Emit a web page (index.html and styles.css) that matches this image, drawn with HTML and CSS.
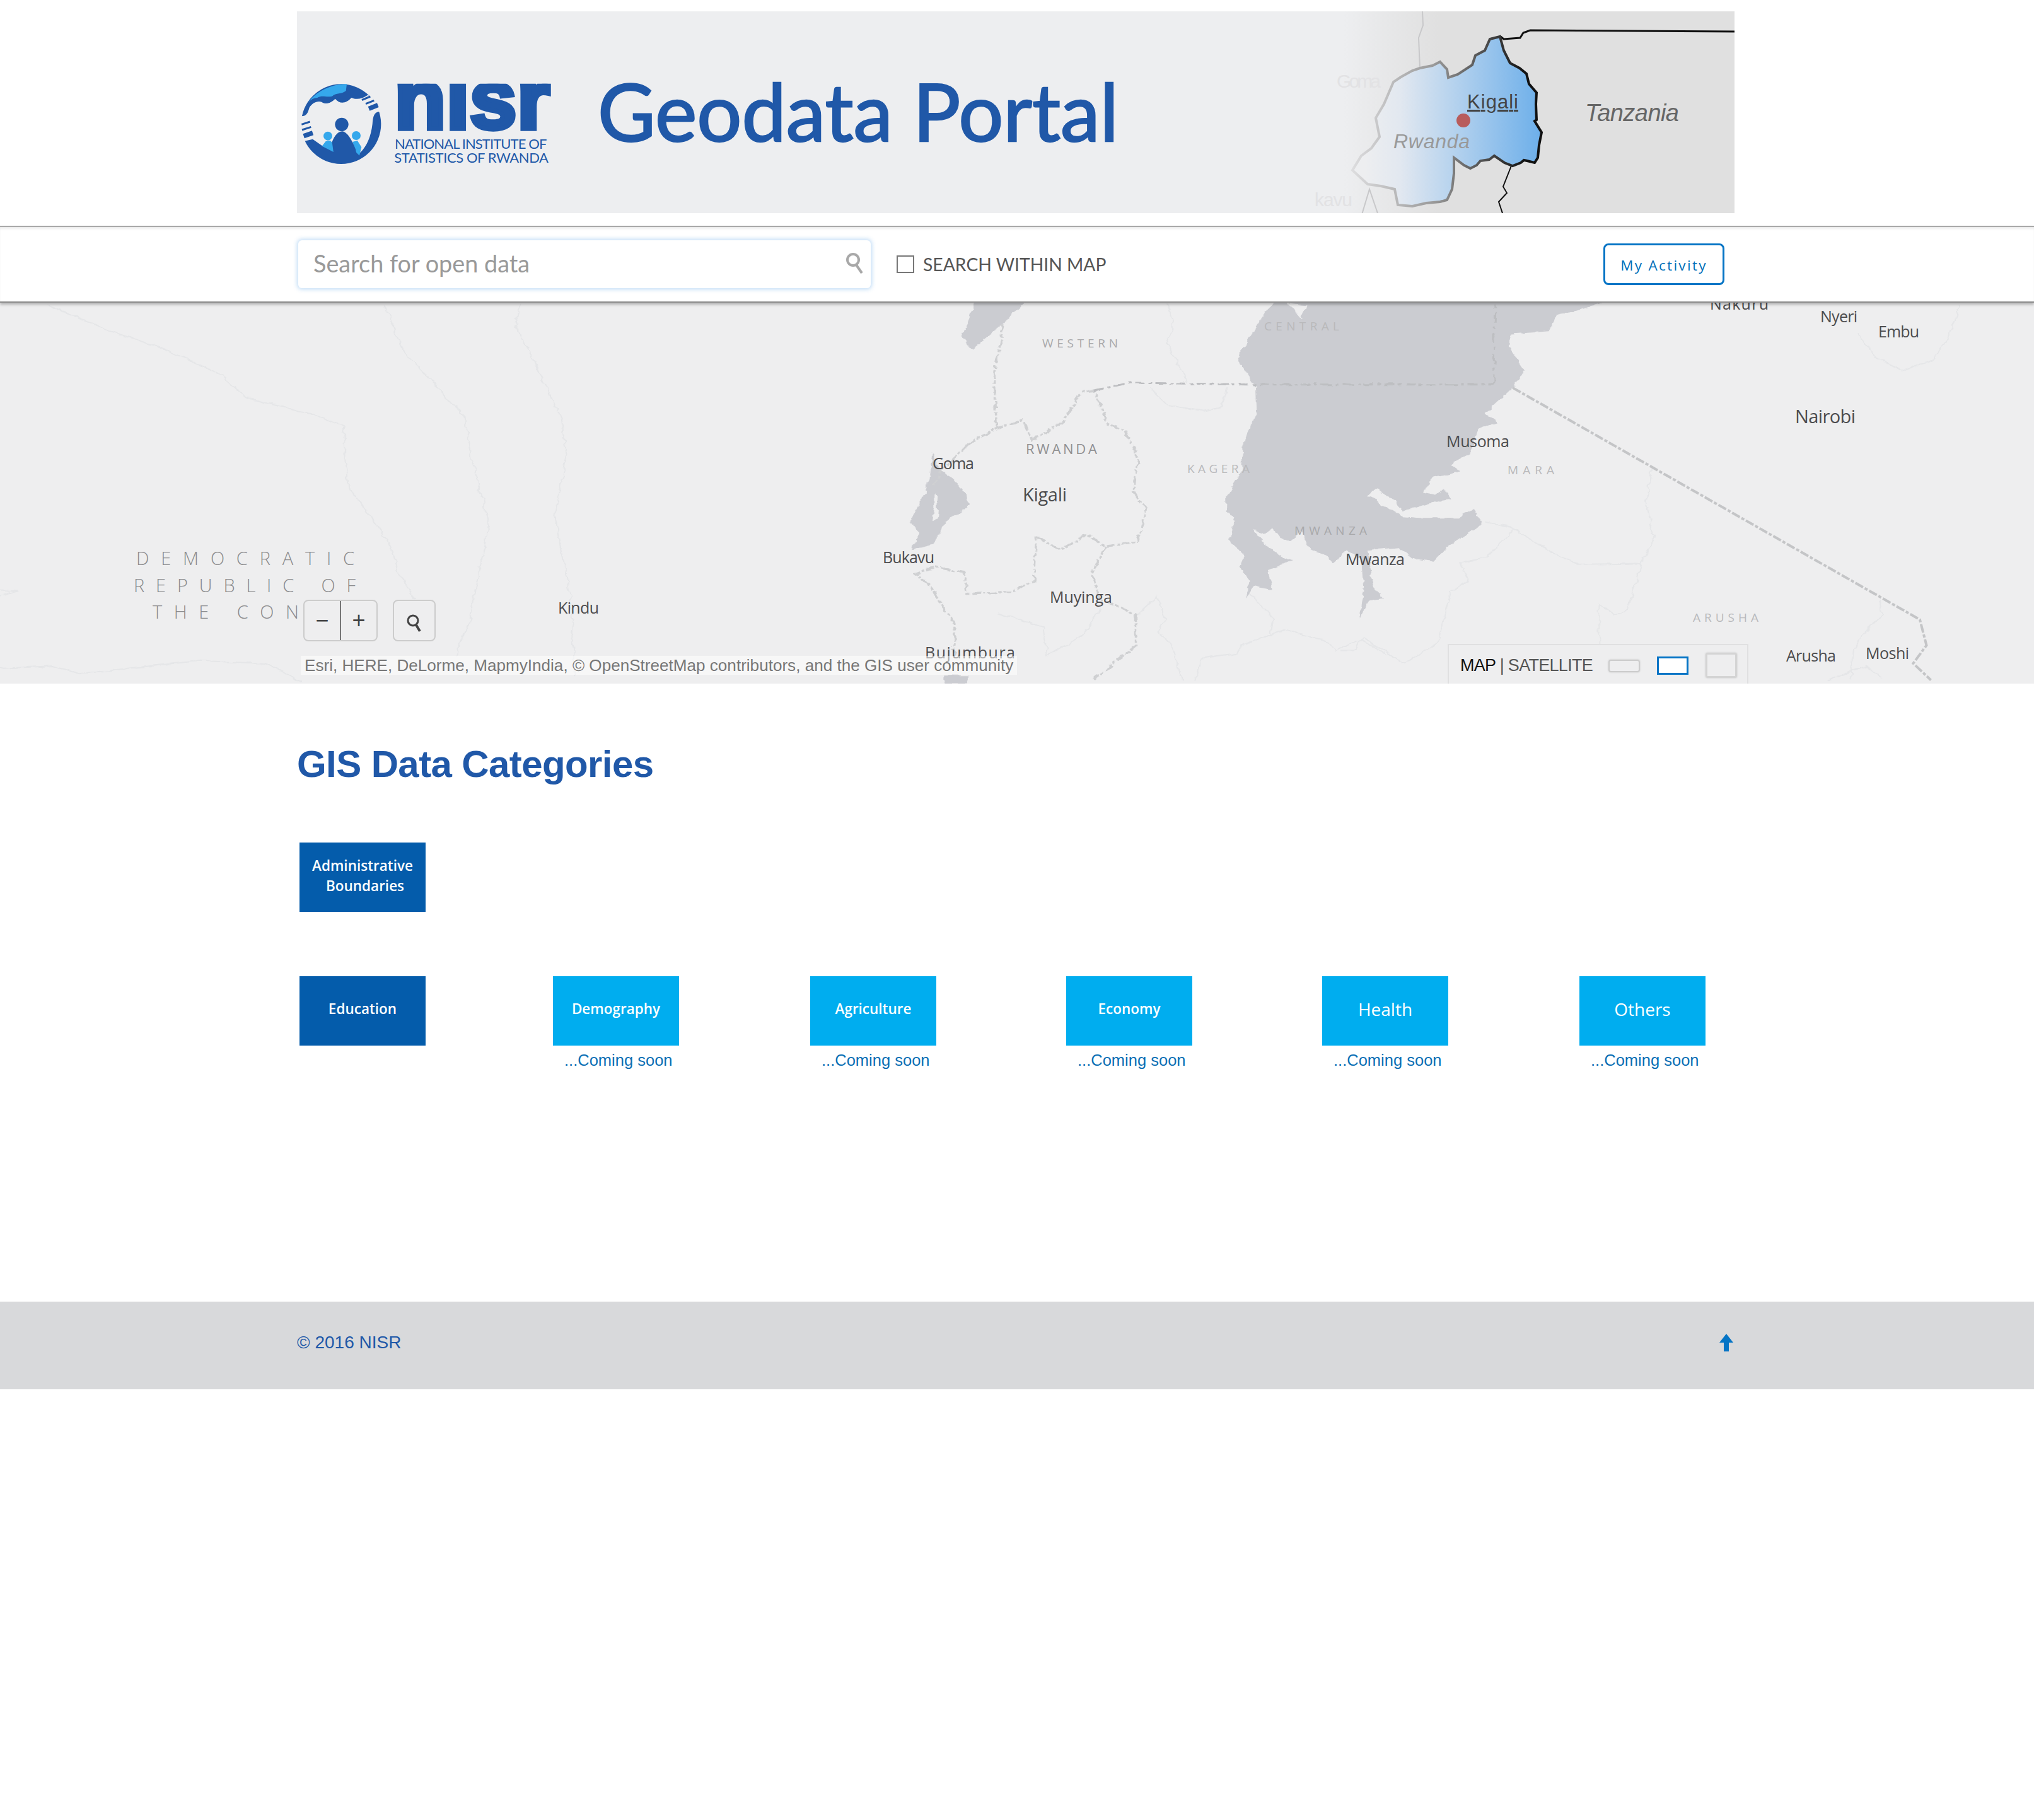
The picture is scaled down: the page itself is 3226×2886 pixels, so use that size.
FILE: index.html
```html
<!DOCTYPE html>
<html lang="en">

<head>
    <meta charset="UTF-8">
    <meta name="viewport" content="width=device-width, initial-scale=1.0">
    <link rel="stylesheet" href="styles.css">
    <title>Geodata Portal</title>
</head>

<body>
    <header class="wrap banner">
        <svg class="logo" viewBox="3 0 1257 540" role="img" aria-label="NISR logo">
            <defs>
                <clipPath id="noDot"><rect x="460" y="98" width="760" height="230"></rect></clipPath>
            </defs>
            <circle class="logo-dark" cx="213" cy="290" r="190"></circle>
            <path class="logo-light" d="M58,186 C90,140 160,100 240,100 L236,132 C215,150 190,140 170,158 C140,165 125,150 100,165 C85,165 70,172 58,186Z"></path>
            <path class="logo-hole" d="M0,258 L30,252 C50,250 55,235 62,212 C75,190 100,178 120,185 C140,200 165,190 185,170 C205,195 235,195 262,165 C285,175 310,172 340,152 L420,190 L420,240 L392,232 C372,235 365,250 362,290 C355,350 335,395 305,425 L125,395 L78,362 L0,380Z"></path>
            <path class="logo-bar" d="M25,292 L65,279 M27,318 L70,304"></path>
            <path class="logo-bar thick" d="M35,347 L78,332 M345,217 L388,200"></path>
            <path class="logo-bar" d="M312,176 L352,159 M330,194 L370,178"></path>
            <path class="logo-light" d="M122,395 L140,372 L160,368 L178,385 L190,430Z M268,375 L290,368 L310,400 L300,440 L280,420Z"></path>
            <circle class="logo-light" cx="150" cy="347" r="21"></circle>
            <circle class="logo-light" cx="285" cy="345" r="21"></circle>
            <circle class="logo-dark" cx="216" cy="292" r="32"></circle>
            <path class="logo-dark" d="M170,375 Q190,325 220,325 Q250,330 282,410 L290,450 L180,450Z"></path>
            <g clip-path="url(#noDot)">
                <text class="logo-mark" x="466" y="311" textLength="740" lengthAdjust="spacingAndGlyphs">nisr</text>
            </g>
            <text class="logo-name" x="468" y="407" textLength="724">NATIONAL INSTITUTE OF</text>
            <text class="logo-name" x="466" y="475" textLength="734">STATISTICS OF RWANDA</text>
        </svg>
        <h1 class="title">Geodata Portal</h1>
        <svg class="locator" viewBox="2000 18 751 320">
            <defs>
                <linearGradient id="rwFill" gradientUnits="userSpaceOnUse" x1="2165" y1="0" x2="2440" y2="0">
                    <stop offset="0" stop-color="#edeef0"></stop>
                    <stop offset="0.2" stop-color="#e2e8f0"></stop>
                    <stop offset="1" stop-color="#6fb0ea"></stop>
                </linearGradient>
                <linearGradient id="rwLine" gradientUnits="userSpaceOnUse" x1="2130" y1="0" x2="2420" y2="0">
                    <stop offset="0" stop-color="#e4e4e6"></stop>
                    <stop offset="0.5" stop-color="#999"></stop>
                    <stop offset="1" stop-color="#111"></stop>
                </linearGradient>
            </defs>
            <path class="loc-ghost" d="M2256,18 L2257,40 L2250,60 L2252,108"></path>
            <path class="loc-ghost" d="M2185,338 L2172,300 L2160,340"></path>
            <path class="loc-border" d="M2363,62 L2380,58 L2385,62 L2411,60 L2416,52 L2427,48 L2751,50"></path>
            <path class="loc-border thin" d="M2397,263 L2384,296 L2390,306 L2377,320 L2383,338"></path>
            <path class="loc-rw" d="M2379,58 L2385,80 L2395,100 L2410,108 L2421,117 L2425,133 L2437,147 L2436,165 L2437,190 L2434,192 L2445,210 L2441,230 L2439,250 L2434,258 L2422,255 L2417,254 L2412,258 L2399,263 L2386,258 L2370,247 L2362,253 L2348,255 L2342,262 L2332,267 L2322,262 L2306,250 L2306,275 L2303,300 L2295,317 L2284,320 L2262,322 L2240,327 L2217,325 L2212,300 L2190,295 L2169,292 L2145,270 L2159,247 L2175,235 L2188,217 L2182,187 L2195,165 L2210,130 L2222,122 L2240,112 L2252,108 L2272,104 L2284,98 L2295,110 L2297,123 L2312,118 L2335,103 L2340,88 L2355,80 L2363,62Z"></path>
            <circle class="loc-dot" cx="2321" cy="191" r="11"></circle>
            <text class="loc-ghost-text" x="2120" y="139" textLength="70">Goma</text>
            <text class="loc-ghost-text" x="2085" y="327" textLength="60">kavu</text>
            <text class="loc-kigali" x="2327" y="172" textLength="81">Kigali</text>
            <text class="loc-rwanda" x="2210" y="235" textLength="121">Rwanda</text>
            <text class="loc-tanzania" x="2514" y="192" textLength="149">Tanzania</text>
        </svg>
    </header>

    <div class="toolbar">
        <div class="wrap toolbar-inner">
            <div class="search">
                <span class="placeholder">Search for open data</span>
                <svg class="search-icon" viewBox="0 0 30 36">
                    <circle cx="12" cy="12" r="9"></circle>
                    <path d="M17,20 L26,33"></path>
                </svg>
            </div>
            <span class="checkbox"></span>
            <span class="check-label">SEARCH WITHIN MAP</span>
            <a class="activity" href="#">My Activity</a>
        </div>
    </div>

    <section class="map">
        <svg class="basemap" viewBox="0 480 3226 604">
            <defs>
                <filter id="rough" x="-5%" y="-5%" width="110%" height="110%">
                    <feTurbulence type="fractalNoise" baseFrequency="0.035" numOctaves="3" seed="4"></feTurbulence>
                    <feDisplacementMap in="SourceGraphic" scale="16" xChannelSelector="R" yChannelSelector="G"></feDisplacementMap>
                    <feGaussianBlur stdDeviation="0.7"></feGaussianBlur>
                </filter>
            </defs>
            <g class="rough" transform="translate(0 460) scale(.7015 .4082)">
                <path class="river" d="M110,60 L250,160 L360,220 L500,330 L560,420 L720,490 L775,530 L790,770 L880,980 L900,1100 L940,1200"></path>
                <path class="river" d="M870,60 L910,230 L1050,490 L1070,680 L1105,910 L1060,1300 L1030,1420"></path>
                <path class="river" d="M1180,50 L1165,130 L1270,500 L1280,650 L1255,880 L1290,1190 L1300,1500"></path>
                <path class="river" d="M0,1470 L120,1460 L180,1490 L450,1440 L600,1450 L680,1520"></path>
                <path class="river" d="M0,1165 L40,1170 L0,1185"></path>
            </g>
            <g class="rough" transform="translate(1100 460) scale(.7015 .4082)">
                <path class="lake" d="M1310,45 L1250,200 L1228,270 L1270,370 L1272,480 L1245,580 L1240,700 L1205,800 L1205,850 L1225,900 L1210,970 L1245,1030 L1235,1070 L1255,1130 L1250,1195 L1270,1150 L1310,1165 L1300,1090 L1350,1050 L1300,1000 L1262,925 L1290,950 L1310,925 L1325,960 L1345,975 L1375,935 L1395,1010 L1430,1030 L1445,1060 L1480,1010 L1510,1050 L1515,1180 L1505,1275 L1530,1205 L1563,1200 L1533,1150 L1530,1070 L1523,1010 L1593,1000 L1623,1040 L1673,1055 L1703,1000 L1783,910 L1763,845 L1728,885 L1643,885 L1603,880 L1525,800 L1545,770 L1583,820 L1603,860 L1623,850 L1678,820 L1713,810 L1698,770 L1678,795 L1648,785 L1673,730 L1733,705 L1713,680 L1753,640 L1775,540 L1818,515 L1790,480 L1853,380 L1878,310 L1843,220 L1850,170 L1935,160 L1953,100 L2053,50 L2053,30 L1310,30Z"></path>
                <path class="islet" d="M1340,50 L1385,60 L1375,110 L1355,70Z"></path>
                <path class="lake" d="M540,630 L555,690 L600,760 L625,830 L570,900 L540,990 L490,1010 L510,950 L490,900 L530,760Z"></path>
                <path class="islet" d="M545,790 L555,800 L552,880 L540,900 L545,840Z"></path>
                <path class="lake" d="M640,30 L605,180 L630,230 L700,130 L760,30Z"></path>
                <path class="lake" d="M565,1495 L565,1530 L620,1530 L620,1495Z"></path>
                <path class="river" d="M1070,50 L1085,120 L1070,210 L1118,360"></path>
                <path class="river" d="M1030,380 L1070,445 L1150,470 L1195,455 L1205,380"></path>
                <path class="river" d="M690,1255 L790,1310 L800,1420 L880,1340 L920,1240"></path>
                <path class="river" d="M1000,1265 L1050,1190 L1065,1280 L1050,1330 L1080,1380 L1105,1515"></path>
                <path class="river" d="M1135,1515 L1150,1430 L1230,1410 L1240,1380 L1305,1340 L1335,1320 L1440,1370 L1450,1400 L1510,1355 L1568,1420"></path>
                <path class="river" d="M1260,1180 L1310,1280 L1305,1345"></path>
                <path class="border" d="M700,130 L680,320 L685,540"></path>
                <path class="border" d="M620,600 L560,700 L545,760"></path>
                <path class="border" d="M620,600 L680,540 L745,505 L765,580 L830,520 L880,395 L905,390 L935,520 L975,545 L1005,650 L995,780 L1020,850 L1005,980 L930,995 L890,950 L830,1010 L775,960 L770,1130 L720,1175 L620,1180 L610,1100 L550,1075 L500,1100 L535,1150 L590,1300 L590,1420"></path>
                <path class="border" d="M930,995 L900,1110 L920,1200 L1000,1260 L1000,1380 L950,1450 L905,1515"></path>
                <path class="border dash" d="M905,390 L985,360 L1250,367 L1810,367"></path>
                <path class="border dash" d="M1810,367 L1813,50"></path>
            </g>
            <g class="rough" transform="translate(2126 460) scale(.7015 .4082)">
                <path class="river" d="M330,900 L385,920 L480,1020 L540,1065 L680,1062"></path>
                <path class="river" d="M705,690 L690,820 L710,960 L680,1062 L650,1240 L620,1265 L585,1220 L585,1375"></path>
                <path class="river" d="M390,930 L330,1040 L270,1060 L290,1130 L250,1170 L220,1370 L145,1450 L50,1350 L30,1400 L0,1400"></path>
                <path class="river" d="M1170,170 L1210,260 L1270,315 L1340,270 L1370,200 L1400,60"></path>
                <path class="river" d="M1220,1200 L1225,1260 L1180,1340 L1160,1400 L1155,1510"></path>
                <path class="river" d="M1100,1515 L1190,1460 L1225,1510"></path>
            </g>
            <g transform="translate(2126 460) scale(.7015 .4082)">
                <path class="border strong" d="M390,380 L1310,1280 L1325,1380 L1295,1450 L1335,1515"></path>
            </g>
            <text class="region" x="1653" y="551" textLength="120">WESTERN</text>
            <text class="region faint" x="2005" y="524" textLength="119">CENTRAL</text>
            <text class="region dark" x="1627" y="720" textLength="113">RWANDA</text>
            <text class="region faint" x="1883" y="750" textLength="99">KAGERA</text>
            <text class="region" x="2053" y="848" textLength="115">MWANZA</text>
            <text class="region faint" x="2391" y="752" textLength="74">MARA</text>
            <text class="region faint" x="2685" y="986" textLength="104">ARUSHA</text>
            <text class="country" x="216" y="896" textLength="346">DEMOCRATIC</text>
            <text class="country" x="212" y="939" textLength="352">REPUBLIC OF</text>
            <text class="country" x="242" y="981" textLength="232">THE CON</text>
            <text class="city" x="885" y="973" textLength="65">Kindu</text>
            <text class="city" x="1479" y="744" textLength="66">Goma</text>
            <text class="city big" x="1622" y="795" textLength="70">Kigali</text>
            <text class="city" x="1400" y="893" textLength="82">Bukavu</text>
            <text class="city" x="1665" y="956" textLength="99">Muyinga</text>
            <text class="city" x="1467" y="1044" textLength="143">Bujumbura</text>
            <text class="city" x="2134" y="896" textLength="94">Mwanza</text>
            <text class="city" x="2294" y="709" textLength="100">Musoma</text>
            <text class="city" x="2712" y="491" textLength="93">Nakuru</text>
            <text class="city" x="2887" y="511" textLength="59">Nyeri</text>
            <text class="city" x="2979" y="535" textLength="65">Embu</text>
            <text class="city big" x="2847" y="671" textLength="96">Nairobi</text>
            <text class="city" x="2833" y="1049" textLength="79">Arusha</text>
            <text class="city" x="2959" y="1045" textLength="69">Moshi</text>
        </svg>

        <div class="map-controls">
            <div class="zoom-btns">
                <button class="zoom-btn" type="button">−</button>
                <button class="zoom-btn" type="button">+</button>
            </div>
            <button class="find-btn" type="button">
                <svg viewBox="0 0 24 28">
                    <circle cx="10" cy="10" r="8"></circle>
                    <path d="M15,17 L21,27"></path>
                </svg>
            </button>
        </div>
        <div class="attribution">Esri, HERE, DeLorme, MapmyIndia, © OpenStreetMap contributors, and the GIS user community</div>
        <div class="basemap-switch">
            <span class="switch-label"><b>MAP</b> | SATELLITE</span>
            <span class="swatch wide"></span>
            <span class="swatch active"></span>
            <span class="swatch tall"></span>
        </div>
    </section>

    <main class="wrap categories">
        <h2 class="heading">GIS Data Categories</h2>
        <div class="tile-row single">
            <a class="tile dark double" href="#">Administrative<br><span class="shift">Boundaries</span></a>
        </div>
        <div class="tile-row">
            <div class="cell first"><a class="tile dark" href="#">Education</a></div>
            <div class="cell"><a class="tile light" href="#">Demography</a><p class="soon">...Coming soon</p></div>
            <div class="cell"><a class="tile light" href="#">Agriculture</a><p class="soon">...Coming soon</p></div>
            <div class="cell"><a class="tile light" href="#">Economy</a><p class="soon">...Coming soon</p></div>
            <div class="cell"><a class="tile light thin" href="#">Health</a><p class="soon">...Coming soon</p></div>
            <div class="cell"><a class="tile light thin" href="#">Others</a><p class="soon">...Coming soon</p></div>
        </div>
    </main>

    <footer class="footer">
        <div class="wrap footer-inner">
            <span>© 2016 NISR</span>
            <svg class="to-top" viewBox="0 0 22 28">
                <path d="M11,0 L22,14 L15,14 L15,28 L7,28 L7,14 L0,14Z"></path>
            </svg>
        </div>
    </footer>
</body>

</html>
```

FILE: styles.css
```css
* {
    margin: 0;
    padding: 0;
    box-sizing: border-box;
}

body {
    background-color: #fff;
    font-family: "Liberation Sans", Arial, sans-serif;
    min-height: 2886px;
}

a {
    text-decoration: none;
}

.wrap {
    width: 2280px;
    margin-left: 471px;
}

/* banner */

.banner {
    height: 320px;
    margin-top: 18px;
    display: flex;
    background: linear-gradient(to right, #edeef0 1660px, #e0e0e0 1810px);
}

.logo {
    width: 419px;
    height: 180px;
    margin-top: 82px;
    flex: none;
}

.logo-dark {
    fill: #2058a8;
}

.logo-light {
    fill: #35a8ec;
}

.logo-hole {
    fill: #edeef0;
}

.logo-bar {
    fill: none;
    stroke: #2058a8;
    stroke-width: 9;
}

.logo-bar.thick {
    stroke-width: 22;
}

.logo-mark {
    font-family: "Liberation Sans", sans-serif;
    font-weight: 700;
    font-size: 400px;
    fill: #2058a8;
    stroke: #2058a8;
    stroke-width: 22;
}

.logo-name {
    font-family: Lato, sans-serif;
    font-size: 66px;
    fill: #2058a8;
}

.title {
    font-family: Lato, sans-serif;
    font-weight: 400;
    font-size: 125.6px;
    line-height: 150px;
    color: #2058a8;
    -webkit-text-stroke: 2.5px #2058a8;
    margin: 83px 0 0 58px;
    white-space: nowrap;
}

.locator {
    width: 751px;
    height: 320px;
    margin-left: auto;
    flex: none;
}

.loc-ghost {
    fill: none;
    stroke: #c8c8ca;
    stroke-width: 2;
}

.loc-border {
    fill: none;
    stroke: #111;
    stroke-width: 3;
}

.loc-border.thin {
    stroke-width: 2;
}

.loc-rw {
    fill: url(#rwFill);
    stroke: url(#rwLine);
    stroke-width: 4;
}

.loc-dot {
    fill: #b85c5c;
}

.loc-ghost-text {
    font-size: 30px;
    fill: #e2e2e4;
}

.loc-kigali {
    font-size: 31px;
    fill: #444;
    text-decoration: underline;
}

.loc-rwanda {
    font-size: 32px;
    font-style: italic;
    fill: #999;
}

.loc-tanzania {
    font-size: 38px;
    font-style: italic;
    fill: #666;
}

/* toolbar */

.toolbar {
    height: 122px;
    margin-top: 20px;
    background-color: #fff;
    border-top: 2px solid #a9a9a9;
    border-bottom: 2px solid #8c8c8c;
    box-shadow: 0 3px 4px rgba(0, 0, 0, 0.25), inset 0 4px 4px -2px rgba(0, 0, 0, 0.1);
    position: relative;
    z-index: 2;
}

.toolbar-inner {
    height: 118px;
    display: flex;
    align-items: center;
}

.search {
    width: 908px;
    height: 76px;
    margin-left: 2px;
    padding: 0 10px 3px 24px;
    display: flex;
    align-items: center;
    justify-content: space-between;
    background-color: #fff;
    border-radius: 6px;
    box-shadow: 0 0 6px 2px rgba(120, 180, 235, 0.45);
}

.placeholder {
    font-family: Lato, sans-serif;
    font-size: 37.8px;
    color: #999;
}

.search-icon {
    width: 30px;
    height: 36px;
}

.search-icon circle,
.search-icon path {
    fill: none;
    stroke: #a8a8a8;
    stroke-width: 4;
}

.checkbox {
    width: 28px;
    height: 28px;
    margin-left: 41px;
    border: 2px solid #777;
}

.check-label {
    font-family: Lato, sans-serif;
    font-size: 28.3px;
    color: #555;
    margin-left: 14px;
}

.activity {
    width: 192px;
    height: 66px;
    margin-left: auto;
    margin-right: 16px;
    padding-top: 3px;
    display: flex;
    align-items: center;
    justify-content: center;
    font-family: "Open Sans", sans-serif;
    font-size: 22.5px;
    letter-spacing: 2.3px;
    color: #0070ba;
    border: 3px solid #0574c5;
    border-radius: 8px;
}

/* map */

.map {
    height: 604px;
    position: relative;
    overflow: hidden;
    background-color: #eeeeef;
}

.basemap {
    display: block;
    width: 3226px;
    height: 604px;
}

.rough {
    filter: url(#rough);
}

.river,
.border {
    fill: none;
    vector-effect: non-scaling-stroke;
}

.river {
    stroke: #e5e6e8;
    stroke-width: 2;
}

.border {
    stroke: #cfd0d2;
    stroke-width: 3.5;
    stroke-dasharray: 14 3 5 3;
}

.border.strong {
    stroke: #c4c5c7;
    stroke-width: 4;
}

.border.dash {
    stroke: #bdbec1;
    stroke-width: 3;
    stroke-dasharray: 16 6 5 6;
}

.lake {
    fill: #cbccd1;
}

.islet {
    fill: #eeeeef;
}

.region {
    font-family: "Open Sans", sans-serif;
    font-size: 19px;
    fill: #a8a8aa;
}

.region.faint {
    fill: #b9b9bb;
}

.region.dark {
    font-size: 22px;
    fill: #919193;
}

.country {
    font-family: "Open Sans", sans-serif;
    font-size: 29px;
    font-weight: 300;
    fill: #8b8b8d;
}

.city {
    font-family: "Open Sans", sans-serif;
    font-size: 25px;
    fill: #4c4c4e;
}

.city.big {
    font-size: 29px;
}

.map-controls {
    position: absolute;
    left: 481px;
    top: 471px;
    display: flex;
    gap: 24px;
}

.zoom-btns {
    width: 118px;
    height: 66px;
    display: flex;
    background-color: #eeeeef;
    border: 2px solid #ccc;
    border-radius: 8px;
}

.zoom-btn {
    flex: 1;
    border: 0;
    background: none;
    font-family: "Liberation Sans", sans-serif;
    font-size: 36px;
    color: #444;
}

.zoom-btn:first-child {
    border-right: 2px solid #777;
}

.find-btn {
    width: 68px;
    height: 66px;
    background-color: #eeeeef;
    border: 2px solid #ccc;
    border-radius: 8px;
    display: flex;
    align-items: center;
    justify-content: center;
}

.find-btn svg {
    width: 24px;
    height: 28px;
    margin-top: 8px;
}

.find-btn circle,
.find-btn path {
    fill: none;
    stroke: #444;
}

.find-btn circle {
    stroke-width: 3;
}

.find-btn path {
    stroke-width: 4;
}

.attribution {
    position: absolute;
    left: 477px;
    top: 560px;
    height: 30px;
    line-height: 30px;
    padding: 0 6px;
    font-size: 26.1px;
    color: #777;
    white-space: nowrap;
    background-color: rgba(255, 255, 255, 0.5);
}

.basemap-switch {
    position: absolute;
    left: 2296px;
    top: 541px;
    width: 477px;
    height: 63px;
    border: 2px solid #e0e0e1;
    border-bottom: 0;
    display: flex;
    align-items: center;
    padding-left: 18px;
}

.switch-label {
    font-size: 27px;
    letter-spacing: -0.7px;
    color: #555;
    white-space: nowrap;
    width: 235px;
    padding-top: 3px;
}

.switch-label b {
    font-weight: 400;
    color: #111;
}

.swatch {
    display: block;
    flex: none;
}

.swatch.wide {
    width: 50px;
    height: 20px;
    border: 2px solid #ccc;
    border-radius: 4px;
    margin-top: 4px;
    box-shadow: 0 0 3px rgba(0, 0, 0, 0.15);
}

.swatch.active {
    width: 50px;
    height: 29px;
    margin-left: 27px;
    margin-top: 4px;
    background-color: #fff;
    border: 3px solid #0574c5;
}

.swatch.tall {
    width: 50px;
    height: 40px;
    margin-left: 27px;
    margin-top: 2px;
    border: 3px solid #d4d4d4;
    border-radius: 3px;
    box-shadow: 0 0 3px rgba(0, 0, 0, 0.15);
}

/* categories */

.categories {
    height: 980px;
    padding-top: 93px;
}

.heading {
    font-size: 60px;
    font-weight: 700;
    line-height: 70px;
    letter-spacing: -0.6px;
    color: #2058a8;
    margin-bottom: 89px;
}

.tile-row {
    display: grid;
    grid-template-columns: 402px 408px 406px 406px 408px 200px;
    padding-left: 4px;
}

.tile-row.single {
    margin-bottom: 102px;
}

.tile {
    width: 200px;
    height: 110px;
    display: block;
    padding-top: 36px;
    font-family: "Open Sans", sans-serif;
    font-size: 22.5px;
    font-weight: 600;
    line-height: 32px;
    text-align: center;
    color: #fff;
}

.tile.double {
    padding-top: 21px;
}

.tile.dark {
    background-color: #045cab;
}

.tile.light {
    background-color: #00adef;
}

.tile.thin {
    font-size: 28px;
    font-weight: 400;
}

.shift {
    margin-left: 8px;
}

.soon {
    font-size: 25.5px;
    line-height: 30px;
    color: #0a6fb5;
    margin: 8px 0 0 18px;
    white-space: nowrap;
}

/* footer */

.footer {
    height: 139px;
    background-color: #d8d9db;
}

.footer-inner {
    height: 130px;
    display: flex;
    align-items: center;
    justify-content: space-between;
    font-size: 28px;
    color: #2058a8;
}

.to-top {
    width: 22px;
    height: 28px;
    margin-right: 2px;
}

.to-top path {
    fill: #0574c5;
}
```
